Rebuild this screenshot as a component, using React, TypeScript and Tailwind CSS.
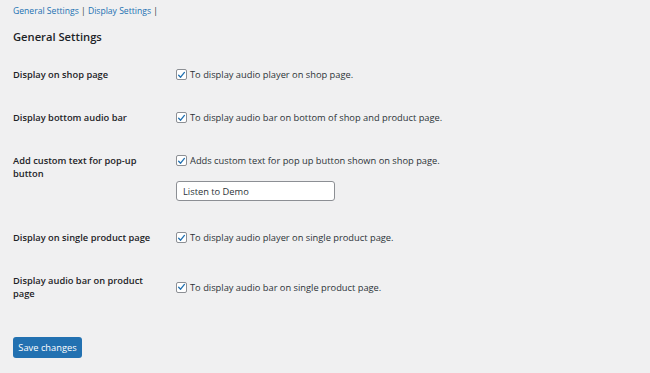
import React from "react";

const font = { fontFamily: '"Open Sans", "Noto Sans", sans-serif' };

function Check() {
  return (
    <span className="inline-flex h-[11px] w-[11px] shrink-0 items-center justify-center rounded-[2px] border border-[#8c8f94] bg-white">
      <svg viewBox="0 0 12 12" className="h-[10px] w-[10px]">
        <path d="M2.2 6.3 L4.8 8.9 L9.9 2.6" fill="none" stroke="#2271b1" strokeWidth="1.8" strokeLinecap="round" strokeLinejoin="round" />
      </svg>
    </span>
  );
}

function CheckLine({ text }: { text: string }) {
  return (
    <div className="flex h-[13px] items-center gap-[3px]">
      <Check />
      <span className="text-[#2c3338]">{text}</span>
    </div>
  );
}

export default function App() {
  return (
    <div className="min-h-[373px] w-[650px] bg-[#f0f0f1] pl-[13px] text-[9.3px] leading-[13px] text-[#1d2327]" style={font}>
      <div className="pt-[5px] text-[8.6px] text-[#2271b1]">
        <span>General Settings</span>
        <span className="text-[#2c3338]"> | </span>
        <span>Display Settings</span>
        <span className="text-[#2c3338]"> |</span>
      </div>
      <h2 className="mt-[11px] text-[11.2px] font-semibold leading-[16px]">General Settings</h2>
      <div className="mt-[8px]">
        <div className="flex py-[15px]">
          <div className="w-[163px] pr-[19px] font-semibold">Display on shop page</div>
          <CheckLine text="To display audio player on shop page." />
        </div>
        <div className="flex py-[15px]">
          <div className="w-[163px] pr-[19px] font-semibold">Display bottom audio bar</div>
          <CheckLine text="To display audio bar on bottom of shop and product page." />
        </div>
        <div className="flex py-[15px]">
          <div className="w-[163px] pr-[19px] font-semibold">Add custom text for pop-up button</div>
          <div className="flex flex-col">
            <CheckLine text="Adds custom text for pop up button shown on shop page." />
            <div className="mt-[14px] flex h-[20px] w-[159px] items-center rounded-[3px] border border-[#8c8f94] bg-white px-[6px] text-[#2c3338]">
              Listen to Demo
            </div>
          </div>
        </div>
        <div className="flex py-[15px]">
          <div className="w-[163px] pr-[19px] font-semibold">Display on single product page</div>
          <CheckLine text="To display audio player on single product page." />
        </div>
        <div className="flex items-center py-[15px]">
          <div className="w-[163px] pr-[19px] font-semibold">Display audio bar on product page</div>
          <CheckLine text="To display audio bar on single product page." />
        </div>
      </div>
      <button className="mt-[22px] flex h-[21px] w-[69px] items-center justify-center rounded-[3px] bg-[#2271b1] text-white">
        Save changes
      </button>
    </div>
  );
}
